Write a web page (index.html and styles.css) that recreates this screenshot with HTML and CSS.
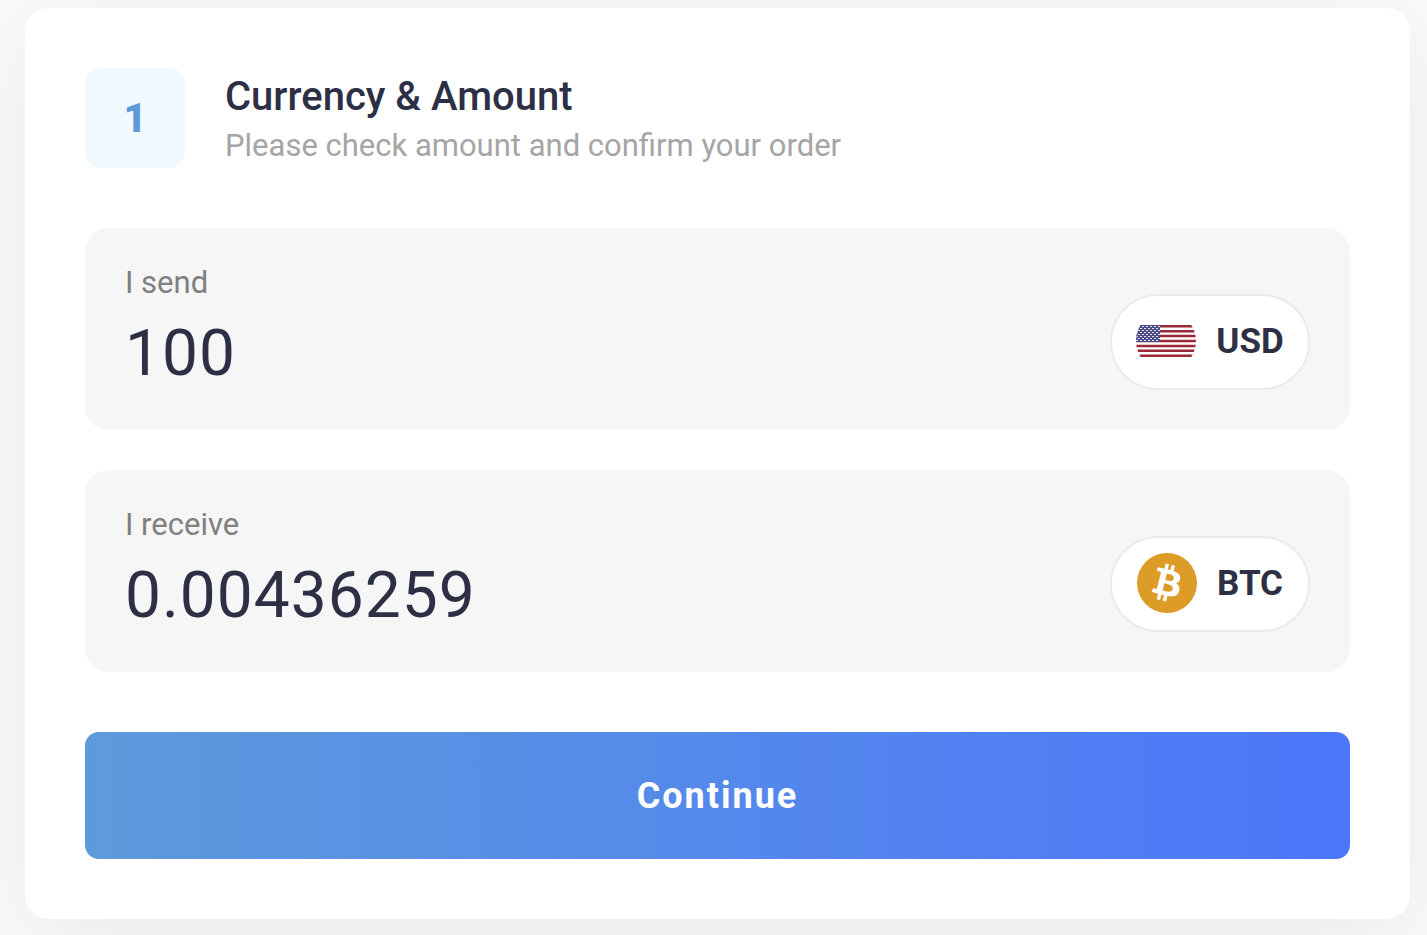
FILE: index.html
```html
<!DOCTYPE html>
<html lang="en">
<head>
    <meta charset="UTF-8">
    <meta name="viewport" content="width=device-width, initial-scale=1.0">
    <title>Currency & Amount</title>
    <link rel="stylesheet" href="styles.css">
</head>
<body>
    <form class="card">
        <div class="card-header">
            <div class="step">1</div>
            <div>
                <h1 class="title">Currency &amp; Amount</h1>
                <p class="subtitle">Please check amount and confirm your order</p>
            </div>
        </div>

        <div class="amount-box">
            <div class="amount-field">
                <label for="send">I send</label>
                <input type="text" id="send" name="send" value="100">
            </div>
            <button type="button" class="currency">
                <svg class="currency-icon" viewBox="0 0 60 60" aria-hidden="true">
                    <defs>
                        <clipPath id="round"><circle cx="30" cy="30" r="30"/></clipPath>
                        <pattern id="stars" width="4" height="4" patternUnits="userSpaceOnUse">
                            <rect width="2" height="1" x="0" y="1" fill="#e4e4ee"/>
                            <rect width="2" height="1" x="2" y="3" fill="#e4e4ee"/>
                        </pattern>
                    </defs>
                    <g clip-path="url(#round)">
                        <rect y="14" width="60" height="32" fill="#fff"/>
                        <path stroke="#9b2a39" stroke-width="2.46" d="M0 15.2h60M0 20.2h60M0 25.1h60M0 30h60M0 34.9h60M0 39.8h60M0 44.8h60"/>
                        <rect y="14" width="24" height="17" fill="#4b4b85"/>
                        <rect y="14" width="24" height="17" fill="url(#stars)"/>
                    </g>
                </svg>
                USD
            </button>
        </div>

        <div class="amount-box">
            <div class="amount-field">
                <label for="receive">I receive</label>
                <input type="text" id="receive" name="receive" value="0.00436259">
            </div>
            <button type="button" class="currency">
                <svg class="currency-icon" viewBox="0 0 24 24" aria-hidden="true">
                    <circle cx="12" cy="12" r="12" fill="#dd9b27"/>
                    <path fill="#fff" fill-rule="evenodd" d="M17.288 10.291c.24-1.59-.974-2.45-2.64-3.03l.54-2.153-1.315-.33-.525 2.107c-.345-.087-.705-.167-1.064-.25l.526-2.127-1.32-.33-.54 2.165c-.285-.067-.565-.132-.84-.2l-1.815-.45-.35 1.407s.975.225.955.236c.535.136.63.486.615.766l-1.477 5.92c-.075.166-.24.406-.614.314.015.02-.96-.24-.96-.24l-.66 1.51 1.71.426.93.242-.54 2.19 1.32.327.54-2.17c.36.1.705.19 1.05.273l-.51 2.154 1.32.33.545-2.19c2.24.427 3.93.257 4.64-1.774.57-1.637-.03-2.58-1.217-3.196.854-.193 1.5-.76 1.68-1.93zm-3 4.22c-.404 1.64-3.157.75-4.05.53l.72-2.9c.896.23 3.757.67 3.33 2.37zm.41-4.24c-.37 1.49-2.662.735-3.405.55l.654-2.64c.744.18 3.137.524 2.75 2.084z"/>
                </svg>
                BTC
            </button>
        </div>

        <button type="submit" class="continue">Continue</button>
    </form>
</body>
</html>
```
FILE: styles.css
```css
* {
    box-sizing: border-box;
}

body {
    font-family: Roboto, sans-serif;
    background: #fafafa;
    color: #2d3045;
    margin: 0;
    padding: 8px 17px 16px 25px;
}

.card {
    padding: 60px;
    border-radius: 24px;
    background: #fff;
    box-shadow: 0 20px 100px rgba(0, 0, 0, 0.07);
}

.card-header {
    display: flex;
    gap: 40px;
    margin-bottom: 60px;
}

.step {
    display: flex;
    align-items: center;
    justify-content: center;
    width: 100px;
    height: 100px;
    border-radius: 16px;
    background: #f1f9ff;
    color: #5e9adb;
    font-size: 40px;
    font-weight: 900;
}

.title {
    margin: 5px 0 2px;
    font-size: 40px;
    font-weight: 500;
    line-height: 48px;
}

.subtitle {
    margin: 0;
    color: #a5a5a5;
    font-size: 31px;
    line-height: 45px;
}

.amount-box {
    display: flex;
    align-items: flex-end;
    justify-content: space-between;
    gap: 40px;
    padding: 36px 40px 40px;
    margin-bottom: 40px;
    border-radius: 24px;
    background: #f6f6f6;
}

.amount-field {
    flex: 1;
    min-width: 0;
}

.amount-field label {
    display: block;
    margin-bottom: 14px;
    color: #808080;
    font-size: 31px;
    line-height: 38px;
}

.amount-field input {
    display: block;
    width: 100%;
    height: 74px;
    padding: 0;
    border: none;
    outline: none;
    background: none;
    color: inherit;
    font: 400 64px Roboto, sans-serif;
    letter-spacing: 1px;
}

.currency {
    display: flex;
    align-items: center;
    justify-content: center;
    gap: 20px;
    min-width: 200px;
    height: 96px;
    padding: 0 20px 2px;
    border: 2px solid #ebebeb;
    border-radius: 48px;
    background: #fff;
    color: inherit;
    font: 700 35px Roboto, sans-serif;
    cursor: pointer;
}

.currency-icon {
    width: 60px;
    height: 60px;
}

.continue {
    display: block;
    width: 100%;
    height: 127px;
    margin-top: 60px;
    border: none;
    border-radius: 14px;
    background: linear-gradient(to right, #5e9adb, #4c77fb);
    color: #fff;
    font: 700 36px Roboto, sans-serif;
    letter-spacing: 2px;
    cursor: pointer;
}
```
